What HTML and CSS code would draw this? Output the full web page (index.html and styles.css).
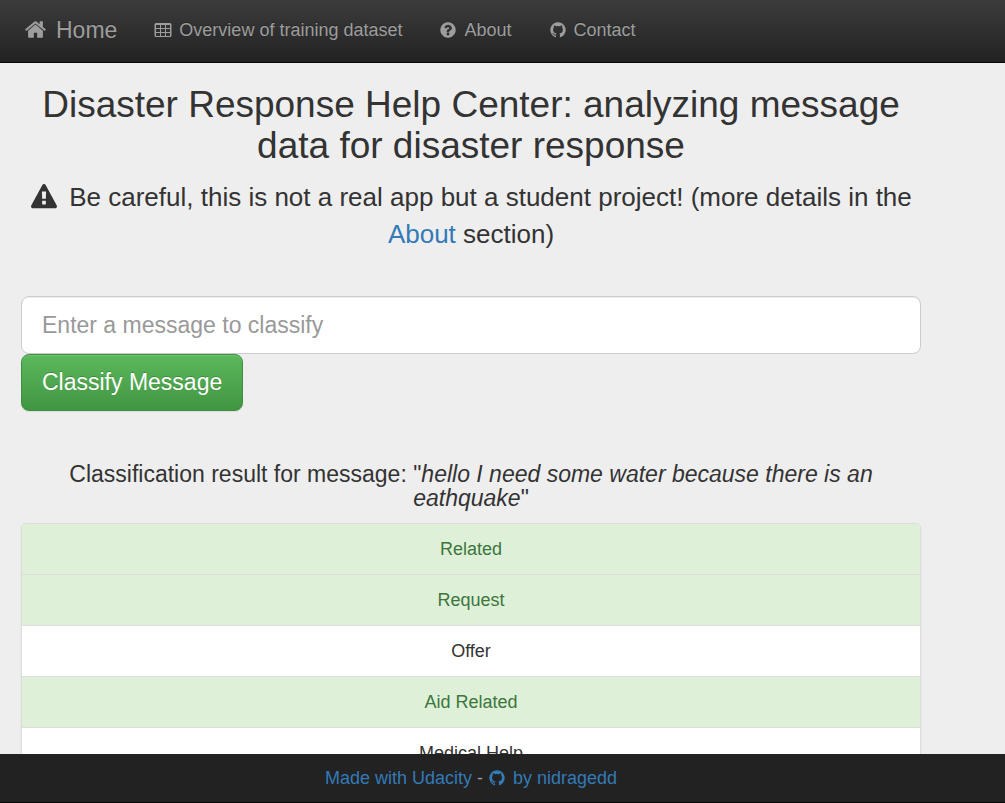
FILE: index.html
```html
<!DOCTYPE html>
<html lang="en">
<head>
<meta charset="utf-8">
<title>Disaster Response Help Center</title>
<link rel="stylesheet" href="styles.css">
</head>
<body>
<svg class="sprite" aria-hidden="true">
  <symbol id="home" viewBox="0 0 1792 1792"><path d="M1472 992v480q0 26-19 45t-45 19h-384v-384h-256v384h-384q-26 0-45-19t-19-45v-480q0-1 .5-3t.5-3l575-474 575 474q1 2 1 6zm223-69l-62 74q-8 9-21 11h-3q-13 0-21-7l-692-577-692 577q-12 8-24 7-13-2-21-11l-62-74q-8-10-7-23.5t11-21.5l719-599q32-26 76-26t76 26l244 204v-195q0-14 9-23t23-9h192q14 0 23 9t9 23v408l219 182q10 8 11 21.5t-7 23.5z"/></symbol>
  <symbol id="table" viewBox="0 0 18 18"><path fill-rule="evenodd" d="M2 2h14a1.500 1.500 0 0 1 1.500 1.500v11a1.500 1.500 0 0 1-1.500 1.500h-14a1.500 1.500 0 0 1-1.500-1.500v-11a1.500 1.500 0 0 1 1.500-1.500zM2 4v3h4v-3zM7 4v3h4v-3zM12 4v3h4v-3zM2 8v3h4v-3zM7 8v3h4v-3zM12 8v3h4v-3zM2 12v3h4v-3zM7 12v3h4v-3zM12 12v3h4v-3z"/></symbol>
  <symbol id="question" viewBox="0 0 1792 1792"><path d="M1024 1376v-192q0-14-9-23t-23-9h-192q-14 0-23 9t-9 23v192q0 14 9 23t23 9h192q14 0 23-9t9-23zm256-672q0-88-55.500-163t-138.500-116-170-41q-243 0-371 213-15 24 8 42l132 100q7 6 19 6 16 0 25-12 53-68 86-92 34-24 86-24 48 0 85.500 26t37.500 59q0 38-20 61t-68 45q-63 28-115.500 86.500t-52.500 125.500v36q0 14 9 23t23 9h192q14 0 23-9t9-23q0-19 21.500-49.500t54.500-49.500q32-18 49-28.500t46-35 44.500-48 28-60.500 12.500-81zm384 192q0 209-103 385.500t-279.500 279.500-385.500 103-385.500-103-279.500-279.500-103-385.500 103-385.500 279.500-279.500 385.500-103 385.500 103 279.500 279.500 103 385.500z"/></symbol>
  <symbol id="github" viewBox="0 0 1792 1792"><path d="M896 128q209 0 385.500 103t279.500 279.500 103 385.500q0 251-146.500 451.500t-378.500 277.500q-27 5-40-7t-13-30q0-3 .5-76.500t.5-134.500q0-97-52-142 57-6 102.500-18t94-39 81-66.500 53-105 20.500-150.500q0-119-79-206 37-91-8-204-28-9-81 11t-92 44l-38 24q-93-26-192-26t-192 26q-16-11-42.500-27t-83.500-38.500-85-13.500q-45 113-8 204-79 87-79 206 0 85 20.500 150t52.500 105 80.500 67 94 39 102.500 18q-39 36-49 103-21 10-45 15t-57 5-65.500-21.500-55.500-62.500q-19-32-48.500-52t-49.500-24l-20-3q-21 0-29 4.500t-5 11.500 9 14 13 12l7 5q22 10 43.500 38t31.500 51l10 23q13 38 44 61.500t67 30 69.500 7 55.500-3.500l23-4q0 38 .5 88.500t.5 54.500q0 18-13 30t-40 7q-232-77-378.500-277.500t-146.500-451.500q0-209 103-385.500t279.500-279.500 385.500-103z"/></symbol>
  <symbol id="warning" viewBox="0 0 1792 1792"><path d="M1024 1375v-190q0-14-9.500-23.500t-22.500-9.500h-192q-13 0-22.500 9.500t-9.500 23.500v190q0 14 9.500 23.500t22.500 9.500h192q13 0 22.500-9.500t9.500-23.500zm-2-374l18-459q0-12-10-19-13-11-24-11h-220q-11 0-24 11-10 7-10 21l17 457q0 10 10 16.500t24 6.500h185q14 0 23.500-6.500t10.500-16.500zm-14-934l768 1408q35 63-2 126-17 29-46.500 46t-63.500 17h-1536q-34 0-63.500-17t-46.500-46q-37-63-2-126l768-1408q17-31 47-49t65-18 65 18 47 49z"/></symbol>
</svg>
<nav class="navbar">
  <a class="brand" href="#home"><svg class="icon-md" aria-hidden="true"><use href="#home"/></svg>Home</a>
  <a class="nav-link" href="#overview"><svg class="icon" aria-hidden="true"><use href="#table"/></svg>Overview of training dataset</a>
  <a class="nav-link" href="#about"><svg class="icon" aria-hidden="true"><use href="#question"/></svg>About</a>
  <a class="nav-link" href="#contact"><svg class="icon" aria-hidden="true"><use href="#github"/></svg>Contact</a>
</nav>
<main class="main">
  <div class="container">
    <h1 class="title">Disaster Response Help Center: analyzing message data for disaster response</h1>
    <p class="lead"><svg class="icon-lg" aria-hidden="true"><use href="#warning"/></svg>Be careful, this is not a real app but a student project! (more details in the <a class="link" href="#about">About</a> section)</p>
    <form class="form">
      <input class="message" type="text" aria-label="Message" placeholder="Enter a message to classify">
      <button class="submit" type="button">Classify Message</button>
    </form>
    <h2 class="result">Classification result for message: "<em>hello I need some water because there is an eathquake</em>"</h2>
    <ul class="list">
      <li class="item success">Related</li>
      <li class="item success">Request</li>
      <li class="item">Offer</li>
      <li class="item success">Aid Related</li>
      <li class="item">Medical Help</li>
    </ul>
  </div>
</main>
<footer class="footer">
  <div class="container credits"><a class="link" href="#udacity">Made with Udacity</a><span>-</span><a class="link author" href="#author"><svg class="icon" aria-hidden="true"><use href="#github"/></svg>by nidragedd</a></div>
</footer>
</body>
</html>
```
FILE: styles.css
```css
* { box-sizing: border-box; }
body {
  display: flex;
  flex-direction: column;
  height: 100vh;
  margin: 0;
  background: #eee;
  color: #333;
  font-family: "Liberation Sans", Arial, sans-serif;
  font-size: 18px;
  line-height: 25px;
}
svg { fill: currentColor; flex: none; }
.sprite { display: none; }
.icon { width: 18px; height: 18px; margin-bottom: 2px; }
.icon-md { width: 23px; height: 23px; margin-bottom: 2px; }
.icon-lg { width: 28px; height: 26px; vertical-align: -4px; margin-right: 11px; }
.navbar {
  display: flex;
  flex: none;
  align-items: center;
  gap: 37px;
  padding: 18px 24px 19px;
  background: linear-gradient(#3c3c3c, #222);
  border-bottom: 1px solid #080808;
}
.brand, .nav-link {
  display: flex;
  align-items: center;
  color: #9d9d9d;
  text-decoration: none;
  text-shadow: 0 -1px 0 rgba(0, 0, 0, .25);
}
.brand { gap: 9px; font-size: 23px; }
.nav-link { gap: 7px; }
.main {
  flex: 1;
  min-height: 0;
  overflow-y: auto;
  scrollbar-width: none;
}
.container { max-width: 900px; margin: 0 21px; text-align: center; }
.title {
  margin: 21px 0 13px;
  font-size: 37px;
  font-weight: 400;
  line-height: 41px;
}
.lead { margin: 0 0 43px; font-size: 26px; line-height: 37px; }
.link { color: #337ab7; text-decoration: none; }
.form { display: flex; flex-direction: column; align-items: flex-start; }
.message, .submit {
  height: 58px;
  padding: 0 20px;
  border-radius: 8px;
  font-family: inherit;
  font-size: 23px;
}
.message {
  width: 100%;
  background: #fff;
  border: 1px solid #ccc;
  color: #555;
  box-shadow: inset 0 1px 1px rgba(0, 0, 0, .075);
}
.message::placeholder { color: #999; opacity: 1; }
.submit {
  height: 57px;
  border: 1px solid #3e8f3e;
  background: linear-gradient(#5cb85c, #419641);
  color: #fff;
  text-shadow: 0 -1px 0 rgba(0, 0, 0, .2);
  box-shadow: inset 0 1px 0 rgba(255, 255, 255, .15), 0 1px 1px rgba(0, 0, 0, .075);
}
.result {
  margin: 51px 0 13px;
  font-size: 23px;
  font-weight: 400;
  line-height: 24px;
}
.list {
  margin: 0;
  padding: 0;
  list-style: none;
  border: 1px solid #ddd;
  border-radius: 5px;
  overflow: hidden;
  box-shadow: 0 1px 2px rgba(0, 0, 0, .075);
}
.item { padding: 13px 19px 12px; background: #fff; }
.item + .item { border-top: 1px solid #ddd; }
.success { background: #dff0d8; color: #3c763d; }
.footer {
  flex: none;
  padding: 12px 0 11px;
  background: #222;
  border-bottom: 1px solid #080808;
  color: #9d9d9d;
}
.credits { display: flex; justify-content: center; gap: 5px; }
.author { display: flex; align-items: center; gap: 7px; }
```
